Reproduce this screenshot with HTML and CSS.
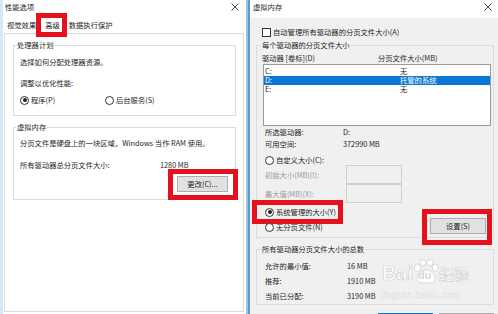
FILE: index.html
```html
<!DOCTYPE html>
<html lang="zh-CN">
<head>
    <meta charset="UTF-8">
    <title>性能选项 / 虚拟内存</title>
    <link rel="stylesheet" href="styles.css">
</head>
<body>
    <div class="win win-left">
        <div class="titlebar">
            <span>性能选项</span>
            <svg class="close" width="8" height="8" viewBox="0 0 8 8"><path d="M0.5 0.5L7.5 7.5M7.5 0.5L0.5 7.5" stroke="#333" stroke-width="0.9"/></svg>
        </div>
        <div class="tabs">
            <span class="tab">视觉效果</span>
            <span class="tab active">高级<i class="mark mark-tab"></i></span>
            <span class="tab">数据执行保护</span>
        </div>
        <div class="panel">
            <fieldset class="group">
                <legend>处理器计划</legend>
                <div class="group-body cpu">
                    <p>选择如何分配处理器资源。</p>
                    <p class="gap9">调整以优化性能:</p>
                    <div class="radios">
                        <span class="opt opt-prog"><i class="radio on"></i>程序(P)</span>
                        <span class="opt"><i class="radio"></i>后台服务(S)</span>
                    </div>
                </div>
            </fieldset>
            <fieldset class="group vm">
                <legend>虚拟内存</legend>
                <div class="group-body">
                    <p>分页文件是硬盘上的一块区域，Windows 当作 RAM 使用。</p>
                    <div class="total">
                        <span class="total-label">所有驱动器总分页文件大小:</span>
                        <span>1280 MB</span>
                    </div>
                    <div class="btn-row">
                        <button class="btn btn-change">更改(C)...<i class="mark mark-change"></i></button>
                    </div>
                </div>
            </fieldset>
        </div>
    </div>

    <div class="win win-right">
        <div class="titlebar">
            <span>虚拟内存</span>
            <svg class="close" width="8" height="8" viewBox="0 0 8 8"><path d="M0.5 0.5L7.5 7.5M7.5 0.5L0.5 7.5" stroke="#333" stroke-width="0.9"/></svg>
        </div>
        <div class="auto-row"><i class="check"></i>自动管理所有驱动器的分页文件大小(A)</div>

        <fieldset class="group rgroup">
            <legend>每个驱动器的分页文件大小</legend>
            <div class="drive-head">
                <span class="col1">驱动器 [卷标](D)</span>
                <span>分页文件大小(MB)</span>
            </div>
            <div class="listbox">
                <div class="lrow"><span class="col-drive">C:</span><span>无</span></div>
                <div class="lrow sel"><span class="col-drive">D:</span><span>托管的系统</span></div>
                <div class="lrow"><span class="col-drive">E:</span><span>无</span></div>
            </div>
            <div class="info"><span class="info-label">所选驱动器:</span><span>D:</span></div>
            <div class="info"><span class="info-label">可用空间:</span><span>372990 MB</span></div>
            <div class="opt-row custom"><i class="radio"></i>自定义大小(C):</div>
            <div class="size-row"><span class="size-label">初始大小(MB)(I):</span><span class="size-input"></span></div>
            <div class="size-row"><span class="size-label">最大值(MB)(X):</span><span class="size-input"></span></div>
            <div class="bottom">
                <div class="bottom-opts">
                    <div class="opt-row sys"><i class="radio on"></i>系统管理的大小(Y)<i class="mark mark-sys"></i></div>
                    <div class="opt-row"><i class="radio"></i>无分页文件(N)</div>
                </div>
                <button class="btn btn-set">设置(S)<i class="mark mark-set"></i></button>
            </div>
        </fieldset>

        <fieldset class="group rgroup sum">
            <legend>所有驱动器分页文件大小的总数</legend>
            <div class="sum-row"><span class="sum-label">允许的最小值:</span><span>16 MB</span></div>
            <div class="sum-row"><span class="sum-label">推荐:</span><span>1910 MB</span></div>
            <div class="sum-row"><span class="sum-label">当前已分配:</span><span>3190 MB</span></div>
        </fieldset>

        <div class="dialog-btns">
            <span class="btn btn-ok"></span>
            <span class="btn btn-cancel"></span>
        </div>

        <div class="watermark">
            <span class="wm-bai">Bai</span>
            <span class="wm-paw">
                <svg width="26" height="27" viewBox="0 0 34 32">
                    <g fill="#fff" stroke="#d4d4d4" stroke-width="1.2">
                        <ellipse cx="6" cy="11" rx="4" ry="5"/>
                        <ellipse cx="13" cy="4.5" rx="4" ry="4"/>
                        <ellipse cx="22" cy="4.5" rx="4" ry="4"/>
                        <ellipse cx="29" cy="11" rx="4" ry="5"/>
                        <path d="M5 26c0-7 6-12 12-12s12 5 12 12c0 4-4 5-12 5S5 30 5 26z"/>
                    </g>
                </svg>
                <span class="wm-du">du</span>
            </span>
            <span class="wm-jy">经验</span>
            <span class="wm-url">jingyan.baidu.com</span>
        </div>
    </div>
</body>
</html>
```

FILE: styles.css
```css
body {
    margin: 0;
    width: 498px;
    height: 314px;
    overflow: hidden;
    display: flex;
    background: #f0f0f0;
    font-family: "Noto Sans CJK SC", sans-serif;
    font-size: 7.3px;
    color: #1e1e1e;
}
p {
    margin: 0;
    line-height: 12px;
}
i {
    font-style: normal;
}
.win {
    height: 314px;
    display: flex;
    flex-direction: column;
    position: relative;
}
.win-left {
    width: 243px;
    background: #fff;
    border-left: 3px solid #d5e8f6;
    border-right: 2px solid #a9bfd3;
}
.win-right {
    width: 248px;
    border-left: 2px solid #5b9bd5;
    overflow: hidden;
}
.titlebar {
    height: 17px;
    flex-shrink: 0;
    display: flex;
    justify-content: space-between;
    align-items: flex-start;
    padding: 1px 7px 0 2px;
    line-height: 12px;
    background: #fff;
}
.win-right .titlebar {
    padding-left: 3px;
    padding-right: 6px;
}
.close {
    margin-top: 2px;
}

/* tabs */
.tabs {
    display: flex;
    height: 15px;
    padding-left: 1px;
}
.tab {
    padding: 0 3px;
    line-height: 15px;
    position: relative;
}
.tab.active {
    padding: 0 4px;
    margin: 0 2px;
}
.panel {
    margin-left: 1px;
    width: 240px;
    height: 279px;
    box-sizing: border-box;
    border: 1px solid #dadada;
    padding: 6px 7px 0 8px;
}

/* group boxes */
.group {
    margin: 0;
    padding: 0;
    border: 1px solid #dcdcdc;
    min-width: 0;
}
.group legend {
    margin-left: 2px;
    padding: 0 1px;
    line-height: 10px;
}
.group-body {
    padding: 6px 6px 9px;
}
.group.vm {
    margin-top: 6px;
}
.vm .group-body {
    padding: 5px 7px 7px 6px;
}
.gap9 {
    margin-top: 9px;
}
.radios {
    display: flex;
    margin-top: 5px;
    line-height: 12px;
}
.opt {
    display: flex;
    align-items: center;
}
.opt-prog {
    width: 85px;
}
.radio {
    width: 7px;
    height: 7px;
    border: 1px solid #333;
    border-radius: 50%;
    box-sizing: content-box;
    margin-right: 2px;
    position: relative;
    background: #fff;
    flex-shrink: 0;
}
.radio.on::after {
    content: "";
    position: absolute;
    left: 1.5px;
    top: 1.5px;
    width: 4px;
    height: 4px;
    border-radius: 50%;
    background: #222;
}
.total {
    display: flex;
    margin-top: 10px;
    line-height: 12px;
}
.total-label {
    width: 140px;
}
.btn-row {
    display: flex;
    justify-content: flex-end;
    margin-top: 5px;
}
.btn {
    font: inherit;
    color: inherit;
    padding: 0;
    background: #e1e1e1;
    border: 1px solid #adadad;
    position: relative;
    line-height: 14px;
    box-sizing: border-box;
}
.btn-change {
    width: 51px;
    height: 16px;
}

/* red highlight frames */
.mark {
    position: absolute;
    border: 5px solid #e5121d;
    box-sizing: border-box;
}
.mark-tab {
    left: -5px;
    top: -5px;
    width: 31px;
    height: 24px;
}
.mark-change {
    left: -10px;
    top: -8px;
    width: 70px;
    height: 31px;
}
.mark-sys {
    left: -10px;
    top: -7px;
    width: 91px;
    height: 24px;
}
.mark-set {
    left: -9px;
    top: -10px;
    width: 70px;
    height: 36px;
}

/* right window */
.auto-row {
    display: flex;
    align-items: center;
    height: 10px;
    margin-top: 9px;
    padding-left: 12px;
}
.check {
    width: 7px;
    height: 7px;
    border: 1px solid #333;
    background: #fff;
    margin-right: 2px;
}
.rgroup {
    margin: 3px 0 0 6px;
    width: 238px;
    box-sizing: border-box;
    padding-left: 5px;
}
.rgroup legend {
    margin-left: -1px;
}
.drive-head {
    display: flex;
    padding-top: 3px;
    line-height: 10px;
}
.col1 {
    width: 116px;
}
.listbox {
    margin: 1px 0 0 1px;
    width: 228px;
    height: 62px;
    box-sizing: border-box;
    border: 1px solid #9a9a9a;
    background: #fff;
    padding-top: 2px;
}
.lrow {
    display: flex;
    height: 9px;
    line-height: 9px;
    padding-left: 1px;
}
.lrow.sel {
    background: #0a78d4;
    color: #fff;
}
.col-drive {
    width: 135px;
}
.info {
    display: flex;
    line-height: 12px;
    padding-left: 3px;
}
.info:first-of-type {
    margin-top: 1px;
}
.info-label {
    width: 78px;
}
.opt-row {
    display: flex;
    align-items: center;
    height: 10px;
    padding-left: 3px;
    position: relative;
}
.opt-row.custom {
    margin-top: 5px;
}
.size-row {
    display: flex;
    align-items: center;
    height: 19px;
    padding-left: 3px;
    color: #9a9a9a;
}
.size-label {
    width: 81px;
}
.size-input {
    width: 56px;
    height: 19px;
    box-sizing: border-box;
    border: 1px solid #cfcfcf;
}
.bottom {
    display: flex;
    justify-content: space-between;
    align-items: flex-end;
    height: 27px;
    margin: 4px 0 3px;
}
.bottom-opts {
    display: flex;
    flex-direction: column;
    gap: 5px;
    align-self: flex-start;
}
.opt-row.sys {
    align-self: flex-start;
}
.btn-set {
    width: 56px;
    height: 16px;
    margin-right: 7px;
}
.sum {
    margin-top: 6px;
    padding: 5px 0 0 8px;
}
.sum legend {
    margin-left: -4px;
}
.sum-row {
    display: flex;
    line-height: 15px;
}
.sum-label {
    width: 82px;
}
.dialog-btns {
    display: flex;
    gap: 6px;
    margin: 8px 0 0 128px;
}
.dialog-btns .btn {
    width: 55px;
    height: 20px;
    flex-shrink: 0;
}
.btn-ok {
    border-color: #0078d7;
}

/* site watermark */
.watermark {
    position: absolute;
    left: 132px;
    top: 257px;
    width: 92px;
    height: 46px;
    color: #fff;
    pointer-events: none;
}
.wm-bai {
    position: absolute;
    left: 0;
    top: 4px;
    font: bold 20px/24px "Liberation Sans", sans-serif;
    -webkit-text-stroke: 0.7px #d0d0d0;
}
.wm-paw {
    position: absolute;
    left: 31px;
    top: 1px;
}
.wm-du {
    position: absolute;
    left: 5px;
    top: 11px;
    font: bold 11px/13px "Liberation Sans", sans-serif;
    color: #d6d6d6;
}
.wm-jy {
    position: absolute;
    left: 57px;
    top: 7px;
    font: bold 15px/20px "Noto Sans CJK SC", sans-serif;
    -webkit-text-stroke: 0.6px #d0d0d0;
}
.wm-url {
    position: absolute;
    left: -1px;
    top: 33px;
    font: 9px/10px "Liberation Sans", sans-serif;
    color: #fafafa;
    -webkit-text-stroke: 0.3px #d6d6d6;
    letter-spacing: 0.4px;
}
```
